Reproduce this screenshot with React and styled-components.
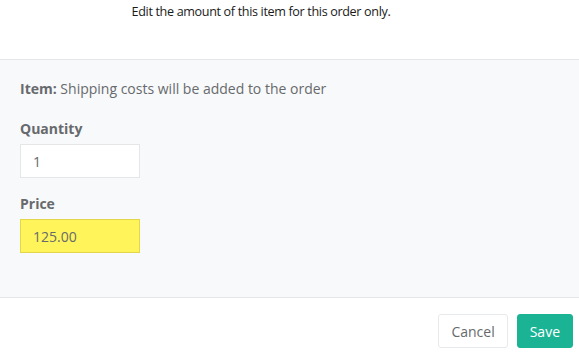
import React from 'react'
import styled, { createGlobalStyle } from 'styled-components'

const Global = createGlobalStyle`
  body {
    margin: 0;
    background: #fff;
    font-family: 'Open Sans', 'Noto Sans', sans-serif;
    color: #676a6c;
  }
`

const Modal = styled.div`
  width: 579px;
  height: 357px;
  display: flex;
  flex-direction: column;
`

const Header = styled.div`
  height: 60px;
  box-sizing: border-box;
  padding: 2px 57px 0 0;
  text-align: center;
  font-size: 12.6px;
  letter-spacing: -0.35px;
  line-height: 20px;
  color: #1a1a1a;
  border-bottom: 1px solid #e5e6e7;
`

const Body = styled.div`
  background: #f8f9fb;
  height: 238px;
  box-sizing: border-box;
  padding: 19px 20px;
  border-bottom: 1px solid #e5e6e7;
  font-size: 14px;
`

const ItemLine = styled.p`
  margin: 0 0 21px;
  line-height: 19px;
  strong {
    font-weight: 700;
  }
`

const Field = styled.div`
  display: flex;
  flex-direction: column;
  margin-bottom: 16px;
`

const Label = styled.label`
  font-weight: 700;
  line-height: 20px;
  margin-bottom: 5px;
`

const Input = styled.input`
  width: 120px;
  height: 34px;
  box-sizing: border-box;
  padding: 6px 12px;
  font-family: inherit;
  font-size: 14px;
  color: #676a6c;
  border: 1px solid ${p => (p.$highlight ? '#e2d64c' : '#e5e6e7')};
  background: ${p => (p.$highlight ? '#fff55a' : '#fff')};
  outline: none;
`

const Footer = styled.div`
  display: flex;
  justify-content: flex-end;
  gap: 9px;
  padding: 16px 6px 0 0;
`

const Button = styled.button`
  height: 34px;
  box-sizing: border-box;
  padding: 0 12px;
  font-family: inherit;
  font-size: 14px;
  border-radius: 3px;
  border: 1px solid ${p => (p.$primary ? '#1ab394' : '#e7eaec')};
  background: ${p => (p.$primary ? '#1ab394' : '#fff')};
  color: ${p => (p.$primary ? '#fff' : '#676a6c')};
  cursor: pointer;
`

export default function App() {
  return (
    <>
      <Global />
      <Modal>
        <Header>Edit the amount of this item for this order only.</Header>
        <Body>
          <ItemLine>
            <strong>Item:</strong> Shipping costs will be added to the order
          </ItemLine>
          <Field>
            <Label>Quantity</Label>
            <Input defaultValue="1" />
          </Field>
          <Field>
            <Label>Price</Label>
            <Input $highlight defaultValue="125.00" />
          </Field>
        </Body>
        <Footer>
          <Button>Cancel</Button>
          <Button $primary>Save</Button>
        </Footer>
      </Modal>
    </>
  )
}
